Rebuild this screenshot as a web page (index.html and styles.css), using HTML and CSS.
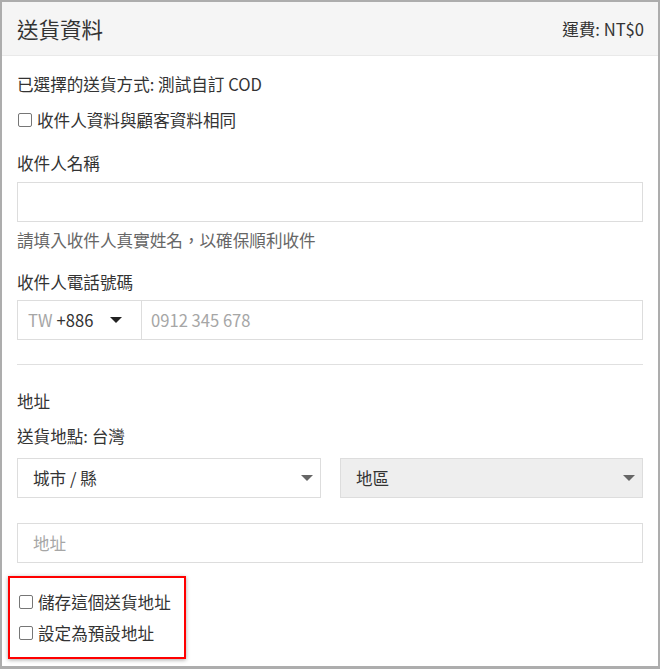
FILE: index.html
```html
<!DOCTYPE html>
<html lang="zh-Hant">
  <head>
    <meta charset="UTF-8" />
    <meta name="viewport" content="width=device-width, initial-scale=1.0" />
    <title>送貨資料</title>
    <link rel="stylesheet" href="styles.css">
  </head>
  <body>
    <div class="panel">
      <div class="panel_header">
        <h2 class="panel_title">送貨資料</h2>
        <span class="fee">運費: NT$0</span>
      </div>
      <div class="panel_body">
        <p class="line">已選擇的送貨方式: 測試自訂 COD</p>
        <label class="check first_check"><span class="box"></span>收件人資料與顧客資料相同</label>

        <p class="label name_label">收件人名稱</p>
        <div class="field"></div>
        <p class="help">請填入收件人真實姓名，以確保順利收件</p>

        <p class="label phone_label">收件人電話號碼</p>
        <div class="field phone">
          <div class="country">
            <span class="code">TW</span>
            <span class="dial">+886</span>
            <span class="caret dark"></span>
          </div>
          <div class="phone_input">0912 345 678</div>
        </div>

        <hr class="divider" />

        <p class="label addr_label">地址</p>
        <p class="line place">送貨地點: 台灣</p>
        <div class="selects">
          <div class="select">城市 / 縣<span class="caret"></span></div>
          <div class="select disabled">地區<span class="caret"></span></div>
        </div>
        <div class="field address">地址</div>

        <div class="highlight">
          <label class="check"><span class="box"></span>儲存這個送貨地址</label>
          <label class="check second"><span class="box"></span>設定為預設地址</label>
        </div>
      </div>
    </div>
  </body>
</html>
```

FILE: styles.css
```css
body {
  margin: 0;

  --text: #333333;
  --hint: #a6a6a6;
  --line: #dddddd;
  --frame: #adadad;

  font-family: "Noto Sans CJK TC", "Noto Sans", sans-serif;
  color: var(--text);
  background-color: #ffffff;
}

.panel {
  width: 660px;
  height: 669px;
  box-sizing: border-box;
  border: 2px solid var(--frame);
  border-bottom-width: 3px;
  overflow: hidden;
}

.panel_header {
  height: 53px;
  display: flex;
  align-items: center;
  justify-content: space-between;
  padding: 0 15px;
  background-color: #f5f5f5;
  border-bottom: 1px solid #e9e9e9;
}

.panel_title {
  margin: 0;
  font-size: 21.5px;
  font-weight: normal;
  line-height: 28px;
}

.fee {
  font-size: 16.6px;
  margin-right: -1px;
}

.panel_body {
  padding: 18px 15px 0;
  font-size: 16.6px;
  line-height: 20px;
}

.line,
.label,
.help {
  margin: 0;
}

.check {
  display: flex;
  align-items: center;
  gap: 5px;
}

.box {
  width: 12px;
  height: 12px;
  border: 1px solid #767676;
  border-radius: 2px;
  margin-left: 1px;
}

.first_check {
  margin-top: 16px;
}

.name_label {
  margin-top: 23px;
}

.field {
  height: 40px;
  box-sizing: border-box;
  border: 1px solid var(--line);
  margin-top: 9px;
}

.help {
  margin-top: 8px;
  color: #666666;
}

.phone_label {
  margin-top: 22px;
}

.phone {
  display: flex;
  margin-top: 8px;
}

.country {
  width: 124px;
  display: flex;
  align-items: center;
  padding-left: 10px;
  box-sizing: border-box;
  border-right: 1px solid var(--line);
}

.code {
  color: var(--hint);
  margin-right: 4px;
}

.dial {
  color: var(--text);
}

.phone_input {
  display: flex;
  align-items: center;
  padding-left: 9px;
  color: var(--hint);
}

.caret {
  width: 0;
  height: 0;
  border-left: 6px solid transparent;
  border-right: 6px solid transparent;
  border-top: 6px solid #666666;
  margin-left: auto;
}

.caret.dark {
  border-top-color: #222222;
  margin-left: 17px;
}

.divider {
  margin: 24px 0 0;
  border: 0;
  border-top: 1px solid #e0e0e0;
}

.addr_label {
  margin-top: 26px;
}

.place {
  margin-top: 15px;
}

.selects {
  display: flex;
  gap: 19px;
  margin-top: 12px;
}

.select {
  flex: 1;
  height: 40px;
  box-sizing: border-box;
  border: 1px solid var(--line);
  display: flex;
  align-items: center;
  padding: 0 7px 0 15px;
}

.select:first-child {
  flex: 0 0 304px;
}

.select.disabled {
  background-color: #eeeeee;
}

.address {
  margin-top: 25px;
  display: flex;
  align-items: center;
  padding-left: 15px;
  color: var(--hint);
}

.highlight {
  width: 178px;
  box-sizing: border-box;
  margin: 13px 0 0 -9px;
  padding: 14px 0 14px 8px;
  border: 2px solid #ff0000;
  box-shadow: 0 1px 4px rgba(0, 0, 0, 0.35);
}

.highlight .second {
  margin-top: 11px;
}
```
